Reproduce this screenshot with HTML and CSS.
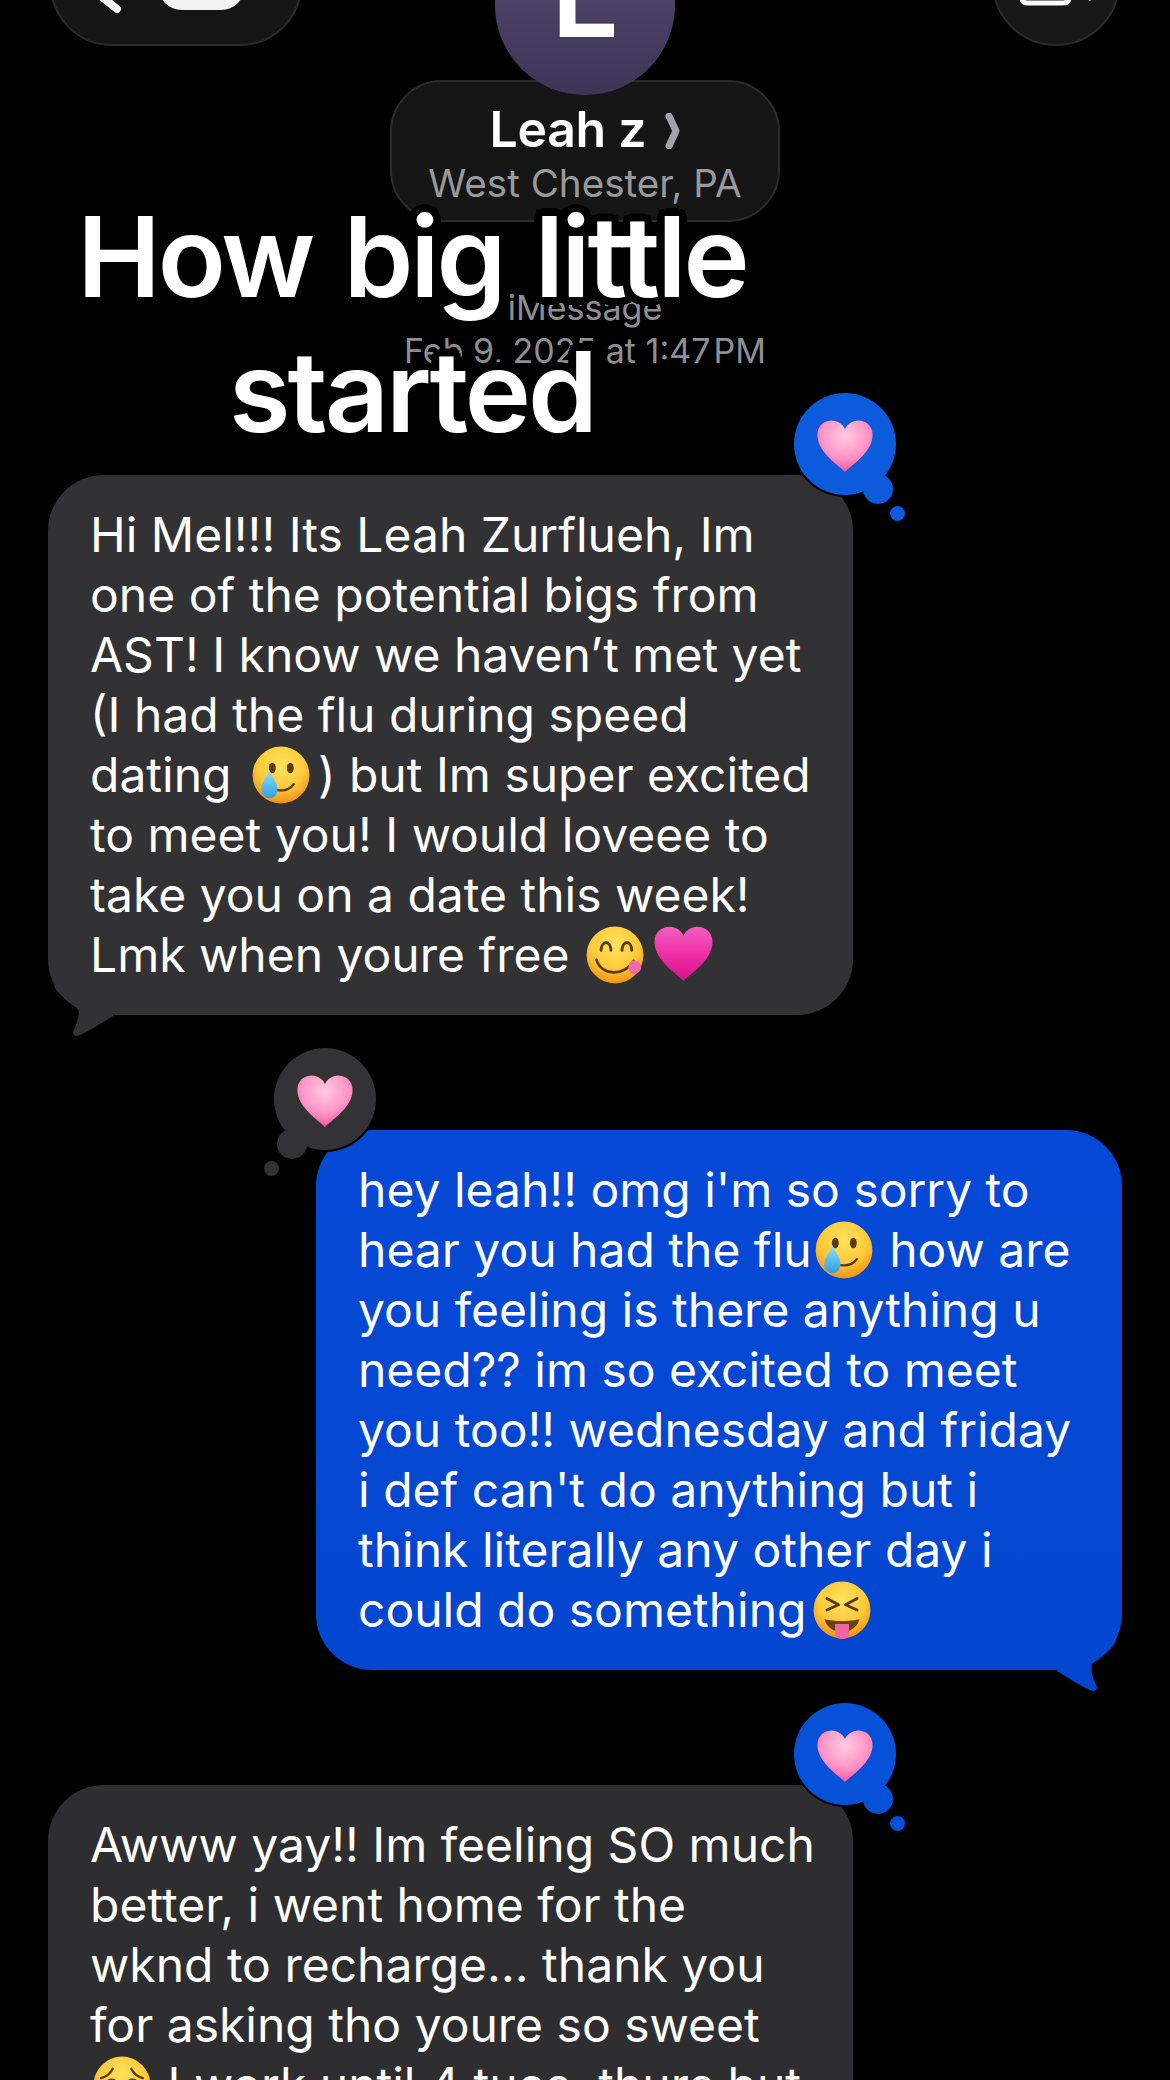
FILE: index.html
```html
<!DOCTYPE html>
<html lang="en">
<head>
  <meta charset="UTF-8">
  <meta name="viewport" content="width=device-width, initial-scale=1.0">
  <title>How big little started</title>
  <link rel="stylesheet" href="styles.css">
</head>
<body>
  <!-- shared emoji drawings -->
  <svg class="defs" aria-hidden="true">
    <defs>
      <radialGradient id="faceFill" cx="50%" cy="32%" r="70%">
        <stop offset="0" stop-color="#ffe35c"/>
        <stop offset="0.6" stop-color="#fdc93a"/>
        <stop offset="1" stop-color="#ef8f14"/>
      </radialGradient>
      <radialGradient id="softHeart" cx="50%" cy="30%" r="72%">
        <stop offset="0" stop-color="#ffcbe3"/>
        <stop offset="0.6" stop-color="#ff93c6"/>
        <stop offset="1" stop-color="#f0509c"/>
      </radialGradient>
      <linearGradient id="hotHeart" x1="0" y1="0" x2="0" y2="1">
        <stop offset="0" stop-color="#f35fc0"/>
        <stop offset="0.5" stop-color="#ee2fa6"/>
        <stop offset="1" stop-color="#d6128c"/>
      </linearGradient>
      <linearGradient id="tearFill" x1="0" y1="0" x2="0" y2="1">
        <stop offset="0" stop-color="#8ee0fa"/>
        <stop offset="1" stop-color="#2f9fe0"/>
      </linearGradient>
      <path id="heartShape" d="M50 92C42 82 4 60 4 30 4 14 16 6 28 6 38 6 46 12 50 20 54 12 62 6 72 6 84 6 96 14 96 30 96 60 58 82 50 92Z"/>
      <symbol id="smileTear" viewBox="0 0 100 100">
        <circle cx="50" cy="50" r="49" fill="url(#faceFill)"/>
        <ellipse cx="35" cy="38" rx="6" ry="9" fill="#5b3a12"/>
        <ellipse cx="66" cy="38" rx="6" ry="9" fill="#5b3a12"/>
        <path d="M44 76C56 78 66 74 72 66" fill="none" stroke="#5b3a12" stroke-width="4" stroke-linecap="round"/>
        <path d="M30 42C24 56 16 64 16 74 16 84 23 90 30 90 38 90 44 84 44 74 44 64 36 56 30 42Z" fill="url(#tearFill)"/>
      </symbol>
      <symbol id="yum" viewBox="0 0 100 100">
        <circle cx="50" cy="50" r="49" fill="url(#faceFill)"/>
        <path d="M26 42C27 24 42 24 43 42M62 42C63 24 78 24 79 42" fill="none" stroke="#5b3a12" stroke-width="5" stroke-linecap="round"/>
        <path d="M18 58C26 86 66 88 82 60" fill="none" stroke="#5b3a12" stroke-width="4.5" stroke-linecap="round"/>
        <path d="M76 62C84 56 96 62 95 72 94 82 82 86 76 80 72 76 72 68 76 62Z" fill="#f46aa5"/>
      </symbol>
      <symbol id="squintTongue" viewBox="0 0 100 100">
        <circle cx="50" cy="50" r="49" fill="url(#faceFill)"/>
        <path d="M24 30L44 41 24 50M76 30L56 41 76 50" fill="none" stroke="#5b3a12" stroke-width="5" stroke-linecap="round" stroke-linejoin="round"/>
        <path d="M20 66C36 70 64 70 80 66 76 82 62 88 50 88 38 88 24 82 20 66Z" fill="#6d3f14"/>
        <path d="M38 74H62V90C62 104 38 104 38 90Z" fill="#f2669f"/>
      </symbol>
      <symbol id="pleadTears" viewBox="0 0 100 100">
        <circle cx="50" cy="50" r="49" fill="url(#faceFill)"/>
        <path d="M14 38C22 36 30 30 34 22M86 38C78 36 70 30 66 22" fill="none" stroke="#5b3a12" stroke-width="4" stroke-linecap="round"/>
        <circle cx="32" cy="52" r="13" fill="#5b3a12"/>
        <circle cx="68" cy="52" r="13" fill="#5b3a12"/>
        <ellipse cx="32" cy="56" rx="12" ry="9" fill="#d9f2fb"/>
        <ellipse cx="68" cy="56" rx="12" ry="9" fill="#d9f2fb"/>
        <path d="M38 80C44 74 56 74 62 80" fill="none" stroke="#5b3a12" stroke-width="4" stroke-linecap="round"/>
      </symbol>
    </defs>
  </svg>

  <main class="page">
    <!-- Top bar, cut off by the edge of the screenshot -->
    <div class="topbar">
      <div class="back-pill">
        <svg class="back-chevron" viewBox="0 0 40 60"><path d="M30 -20L10 0 30 16" fill="none" stroke="#f2f2f2" stroke-width="8" stroke-linecap="round" stroke-linejoin="round"/></svg>
        <span class="count-badge"></span>
      </div>
      <div class="video-btn">
        <svg class="video-icon" viewBox="0 0 110 40"><path d="M4 -20V2C4 6 7 7 10 7H44C48 7 51 6 51 2V-20M72 2L78 -2" fill="none" stroke="#fff" stroke-width="5" stroke-linecap="round"/></svg>
      </div>
    </div>

    <!-- Contact -->
    <header class="contact">
      <div class="avatar"><span>L</span></div>
      <div class="name-pill">
        <div class="name">Leah z <svg class="name-chevron" viewBox="0 0 16 36"><path d="M4 3L11 18 4 33" fill="none" stroke="#a3a3a7" stroke-width="7" stroke-linecap="round" stroke-linejoin="round"/></svg></div>
        <div class="place">West Chester, PA</div>
      </div>
    </header>

    <div class="meta">
      <div>iMessage</div>
      <div>Feb 9, 2025 at 1:47&#8202;PM</div>
    </div>

    <h1 class="title">How big little<br>started</h1>

    <section class="thread">
      <div class="bubble theirs">
        <div class="tapback tapback-right">
          <span class="dot-big"></span><span class="dot-small"></span>
          <svg class="tapback-heart" viewBox="0 0 100 100"><use href="#heartShape" fill="url(#softHeart)"/></svg>
        </div>
        Hi Mel!!! Its Leah Zurflueh, Im<br>
        one of the potential bigs from<br>
        AST! I know we haven’t met yet<br>
        (I had the flu during speed<br>
        dating <svg class="emoji emoji-wide"><use href="#smileTear"/></svg>) but Im super excited<br>
        to meet you! I would loveee to<br>
        take you on a date this week!<br>
        Lmk when youre free <svg class="emoji"><use href="#yum"/></svg><svg class="emoji emoji-heart" viewBox="0 0 100 100"><use href="#heartShape" fill="url(#hotHeart)"/></svg>
        <svg class="tail" viewBox="0 0 70 55"><path d="M6 0C8 7 14 11 22 17 25 19 28 21 30 24 32 28 30 36 25 47 25 51 28 52 32 50 45 44 55 37 65 31V0Z"/></svg>
      </div>

      <div class="bubble mine">
        <div class="tapback tapback-left">
          <span class="dot-big"></span><span class="dot-small"></span>
          <svg class="tapback-heart" viewBox="0 0 100 100"><use href="#heartShape" fill="url(#softHeart)"/></svg>
        </div>
        hey leah!! omg i'm so sorry to<br>
        hear you had the flu<svg class="emoji"><use href="#smileTear"/></svg> how are<br>
        you feeling is there anything u<br>
        need?? im so excited to meet<br>
        you too!! wednesday and friday<br>
        i def can't do anything but i<br>
        think literally any other day i<br>
        could do something<svg class="emoji emoji-wide"><use href="#squintTongue"/></svg>
        <svg class="tail" viewBox="0 0 70 55"><path d="M6 0C8 7 14 11 22 17 25 19 28 21 30 24 32 28 30 36 25 47 25 51 28 52 32 50 45 44 55 37 65 31V0Z"/></svg>
      </div>

      <div class="bubble theirs later">
        <div class="tapback tapback-right">
          <span class="dot-big"></span><span class="dot-small"></span>
          <svg class="tapback-heart" viewBox="0 0 100 100"><use href="#heartShape" fill="url(#softHeart)"/></svg>
        </div>
        Awww yay!! Im feeling SO much<br>
        better, i went home for the<br>
        wknd to recharge... thank you<br>
        for asking tho youre so sweet<br>
        <svg class="emoji"><use href="#pleadTears"/></svg> I work until 4 tues, thurs but
      </div>
    </section>
  </main>
</body>
</html>
```

FILE: styles.css
```css
body {
  margin: 0;
  padding: 0;
  background-color: #000;
  color: white;
  font-family: Inter, "Liberation Sans", sans-serif;
}

.defs {
  position: absolute;
  width: 0;
  height: 0;
}

.page {
  position: relative;
  width: 1170px;
  height: 2080px;
  overflow: hidden;
}

/* Top bar */
.topbar {
  display: flex;
  justify-content: space-between;
  align-items: flex-end;
  height: 46px;
  padding: 0 50px;
}

.back-pill {
  position: relative;
  flex-shrink: 0;
  width: 252px;
  height: 125px;
  box-sizing: border-box;
  background-color: #151515;
  border: 2px solid #2b2b2b;
  border-radius: 62px;
}

.back-chevron {
  position: absolute;
  left: 35px;
  bottom: 0;
  width: 40px;
  height: 60px;
  overflow: visible;
  margin-bottom: -9px;
}

.count-badge {
  position: absolute;
  left: 106px;
  bottom: 34px;
  width: 87px;
  height: 40px;
  background-color: #f2f2f2;
  border-radius: 0 0 24px 24px;
}

.video-btn {
  position: relative;
  flex-shrink: 0;
  width: 128px;
  height: 128px;
  box-sizing: border-box;
  background-color: #171717;
  border: 2px solid #2b2b2b;
  border-radius: 50%;
}

.video-icon {
  position: absolute;
  left: 24px;
  top: 76px;
  width: 110px;
  height: 40px;
  overflow: visible;
}

/* Contact */
.contact {
  display: flex;
  flex-direction: column;
  align-items: center;
  margin-top: -131px;
}

.avatar {
  position: relative;
  z-index: 1;
  display: flex;
  justify-content: center;
  align-items: flex-end;
  width: 180px;
  height: 180px;
  background: linear-gradient(#5a4e74, #3e3456);
  border-radius: 50%;
}

.avatar span {
  font-size: 120px;
  font-weight: 600;
  line-height: 1;
  margin-bottom: 41px;
}

.name-pill {
  width: 390px;
  height: 142px;
  box-sizing: border-box;
  margin-top: -15px;
  padding-top: 19px;
  text-align: center;
  background-color: #151515;
  border: 2px solid #2b2b2b;
  border-radius: 52px;
}

.name {
  font-size: 50px;
  font-weight: 600;
  line-height: 56px;
  letter-spacing: -0.3px;
}

.name-chevron {
  width: 16px;
  height: 36px;
  margin-left: 6px;
  vertical-align: -2px;
}

.place {
  margin-top: 3px;
  font-size: 38.6px;
  line-height: 46px;
  color: #98989d;
}

.meta {
  margin-top: 64px;
  text-align: center;
  font-size: 34px;
  line-height: 43px;
  color: #8e8e93;
}

/* Overlaid caption, black edge cuts into what lies under it */
.title {
  position: absolute;
  z-index: 5;
  top: 189px;
  left: 72px;
  width: 680px;
  margin: 0;
  text-align: center;
  font-size: 112px;
  font-weight: 600;
  line-height: 135px;
  letter-spacing: -3px;
  word-spacing: 6px;
  text-shadow:
    8px 0 0 #000, -8px 0 0 #000, 0 8px 0 #000, 0 -8px 0 #000,
    6px 6px 0 #000, -6px 6px 0 #000, 6px -6px 0 #000, -6px -6px 0 #000,
    7px 3px 0 #000, -7px 3px 0 #000, 7px -3px 0 #000, -7px -3px 0 #000,
    3px 7px 0 #000, -3px 7px 0 #000, 3px -7px 0 #000, -3px -7px 0 #000;
}

/* Messages */
.thread {
  display: flex;
  flex-direction: column;
  gap: 115px;
  margin-top: 103px;
  padding: 0 48px;
}

.bubble {
  position: relative;
  width: 805px;
  min-height: 540px;
  box-sizing: border-box;
  padding: 30px 20px 30px 42px;
  font-size: 48px;
  line-height: 60px;
  border-radius: 56px;
  white-space: nowrap;
}

.theirs {
  background-color: #323234;
  fill: #323234;
}

.later {
  background-color: #2e2e30;
}

.mine {
  align-self: flex-end;
  width: 806px;
  background: linear-gradient(#0549d6, #0346cf);
  fill: #0346cf;
}

.tail {
  position: absolute;
  left: 0;
  bottom: -25px;
  width: 70px;
  height: 55px;
}

.mine .tail {
  left: auto;
  right: 0;
  transform: scaleX(-1);
}

.emoji {
  width: 58px;
  height: 58px;
  margin: 0 3px;
  vertical-align: -12px;
}

.emoji-wide {
  margin: 0 8px 0 7px;
}

.emoji-heart {
  width: 63px;
  height: 63px;
  margin: -4px 0 -4px 5px;
  vertical-align: -10px;
}

/* Heart reactions */
.tapback {
  position: absolute;
  top: -82px;
  width: 102px;
  height: 102px;
  border-radius: 50%;
  box-shadow: 0 0 0 2px #000;
}

.tapback-right {
  left: 746px;
  background-color: #0b5bdc;
}

.later .tapback-right {
  background-color: #0651d8;
}

.tapback-left {
  left: -42px;
  background-color: #333336;
}

.dot-big,
.dot-small {
  position: absolute;
  border-radius: 50%;
  background-color: inherit;
}

.dot-big {
  top: 81px;
  width: 30px;
  height: 30px;
}

.dot-small {
  top: 113px;
  width: 15px;
  height: 15px;
}

.tapback-right .dot-big {
  left: 69px;
}

.tapback-right .dot-small {
  left: 96px;
}

.tapback-left .dot-big {
  left: 3px;
}

.tapback-left .dot-small {
  left: -10px;
}

.tapback-heart {
  position: absolute;
  left: 21px;
  top: 24px;
  width: 60px;
  height: 60px;
}
```
